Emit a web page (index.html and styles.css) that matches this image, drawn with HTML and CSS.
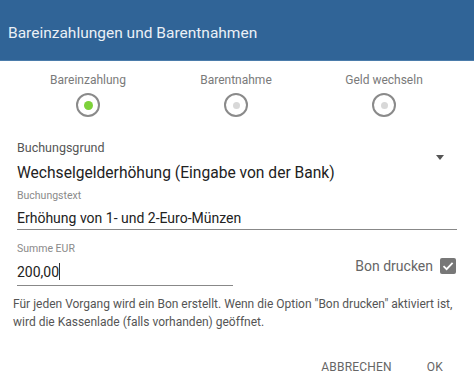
FILE: index.html
```html
<!DOCTYPE html>
<html lang="de">
<head>
<meta charset="utf-8">
<link rel="stylesheet" href="styles.css">
</head>
<body>
<div class="dialog">
  <header class="title-bar">Bareinzahlungen und Barentnahmen</header>
  <div class="radios">
    <div class="radio-item">
      <span class="radio-label">Bareinzahlung</span>
      <span class="radio on"><span class="dot"></span></span>
    </div>
    <div class="radio-item">
      <span class="radio-label">Barentnahme</span>
      <span class="radio"><span class="dot"></span></span>
    </div>
    <div class="radio-item">
      <span class="radio-label">Geld wechseln</span>
      <span class="radio"><span class="dot"></span></span>
    </div>
  </div>
  <div class="form">
    <div class="field select-field">
      <div class="label l-big">Buchungsgrund</div>
      <div class="select-row">
        <span class="select-value">Wechselgelderhöhung (Eingabe von der Bank)</span>
        <span class="arrow"></span>
      </div>
    </div>
    <div class="field">
      <div class="label">Buchungstext</div>
      <div class="input full">Erhöhung von 1- und 2-Euro-Münzen</div>
    </div>
    <div class="sum-row">
      <div class="field sum">
        <div class="label">Summe EUR</div>
        <div class="input short">200,00<span class="caret"></span></div>
      </div>
      <div class="check">
        <span class="check-label">Bon drucken</span>
        <span class="box"><svg width="16" height="16" viewBox="0 0 16 16"><path d="M3.5 8.2 L6.6 11.2 L12.6 4.8" fill="none" stroke="#fff" stroke-width="1.8"/></svg></span>
      </div>
    </div>
    <p class="note">Für jeden Vorgang wird ein Bon erstellt. Wenn die Option "Bon drucken" aktiviert ist, wird die Kassenlade (falls vorhanden) geöffnet.</p>
  </div>
  <div class="actions">
    <span class="btn">ABBRECHEN</span>
    <span class="btn ok">OK</span>
  </div>
</div>
</body>
</html>
```
FILE: styles.css
```css
* { box-sizing: border-box; }
html, body { margin: 0; padding: 0; background: #fff; }
body { font-family: Roboto, "Liberation Sans", sans-serif; color: #222; width: 474px; height: 387px; overflow: hidden; }
.dialog { display: flex; flex-direction: column; }
.title-bar {
  height: 61px;
  background: #306497;
  color: #eaf0f6;
  font-size: 15.5px;
  padding: 24px 0 0 8px;
  border-bottom: 1px solid #4b7cab;
}
.radios { display: grid; grid-template-columns: repeat(3, 148px); padding: 12px 0 0 14px; }
.radio-item { display: flex; flex-direction: column; align-items: center; gap: 5px; }
.radio-label { font-size: 12px; color: #7a7a7a; line-height: 15px; }
.radio {
  width: 24px; height: 24px; border-radius: 50%;
  border: 2px solid #8a8a8a;
  display: flex; align-items: center; justify-content: center;
}
.radio .dot { width: 7px; height: 7px; border-radius: 50%; background: #d8d8d8; }
.radio.on .dot { width: 9px; height: 9px; background: #7dd13a; }
.form { padding: 0 17px 0 17px; margin-top: 23px; }
.field { display: flex; flex-direction: column; }
.label { font-size: 10.5px; color: #8a8a8a; line-height: 13px; }
.label.l-big { font-size: 12.5px; color: #555; line-height: 16px; }
.select-row { display: flex; justify-content: space-between; align-items: flex-start; height: 28px; margin-top: 5px; }
.select-value { font-size: 15.6px; line-height: 24px; color: #222; }
.arrow {
  width: 0; height: 0; margin: -6px 13px 0 0;
  border-left: 4.5px solid transparent; border-right: 4.5px solid transparent;
  border-top: 5px solid #555;
}
.input { font-size: 14px; line-height: 16px; color: #222; border-bottom: 1px solid #888; padding: 8px 0 3px 0; }
.input.full { width: 440px; }
.input.short { padding-bottom: 5px; }
.sum-row { display: flex; justify-content: space-between; align-items: flex-start; margin-top: 12px; }
.field.sum { width: 216px; }
.caret { display: inline-block; width: 1px; height: 17px; background: #333; vertical-align: -3px; }
.check { display: flex; align-items: center; gap: 7px; margin-top: 16px; margin-right: 1px; }
.check-label { font-size: 14px; color: #666; }
.box { width: 16px; height: 16px; background: #777; border-radius: 2px; display: flex; }
.note { margin: 9px 0 0 -4px; font-size: 12px; line-height: 18px; color: #555; }
.actions { display: flex; justify-content: flex-end; gap: 35px; padding: 29px 31px 0 0; }
.btn { font-size: 12px; color: #666; letter-spacing: 0.2px; }
```
